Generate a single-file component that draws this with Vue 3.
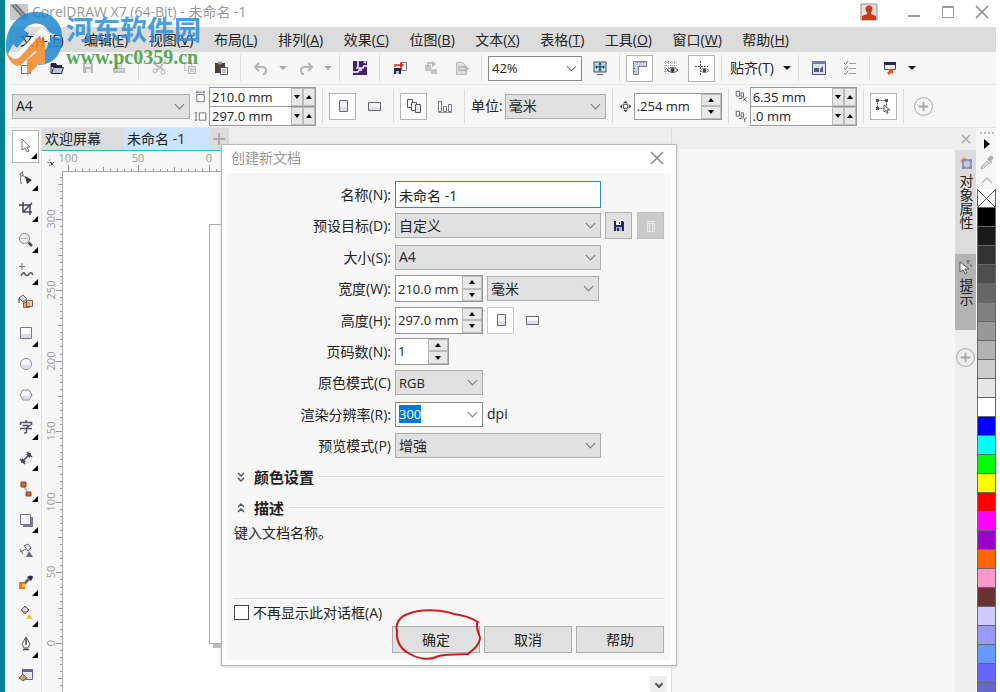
<script setup>
import { ref, onMounted } from 'vue'

const docName = ref('未命名 -1')
const resolution = ref('300')
const resolutionInput = ref(null)

onMounted(() => {
  resolutionInput.value.focus()
  resolutionInput.value.select()
})

const menus = [
  ['文件', 'F'], ['编辑', 'E'], ['视图', 'V'], ['布局', 'L'], ['排列', 'A'], ['效果', 'C'],
  ['位图', 'B'], ['文本', 'X'], ['表格', 'T'], ['工具', 'O'], ['窗口', 'W'], ['帮助', 'H']
]

const icons = {
  newDoc: '<path d="M3.5 5.5h9v8h-9z" fill="#f4f4fa" stroke="#6f6f80"/><circle cx="12.500" cy="4.500" r="2.500" fill="#a5c83c"/>',
  open: '<path d="M2 3h5l1 2h5v2H2z" fill="#24243c"/><path d="M2 13V4M2.500 13.500l2-6h10l-2 6z" fill="#b9c3d8" stroke="#24243c"/>',
  save: '<path d="M3 3h9l1 1v9H3z" fill="#b9b9b9"/><path d="M5 3h6v4H5zM6 9h5v4H6z" fill="#e9e9e9"/>',
  print: '<path d="M5 3h6v4H5z" fill="#e2e2e2" stroke="#c4c4c4"/><path d="M2 8h12v5H2z" fill="#bebebe"/><path d="M4 10h8" stroke="#eee"/>',
  cut: '<path d="M2 3l11 7M13 3L6 10" stroke="#b5b5b5" stroke-width="1.500"/><circle cx="4" cy="11" r="2" fill="none" stroke="#b5b5b5"/><circle cx="12" cy="12" r="2" fill="none" stroke="#b5b5b5"/>',
  copy: '<path d="M2.500 2.500h7v8h-7z" fill="#eee" stroke="#c4c4c4"/><path d="M6.500 6.500h7v7h-7z" fill="#e2e2e2" stroke="#b8b8b8"/><path d="M8 9h4M8 11h4" stroke="#bbb"/>',
  paste: '<path d="M2 3h10v10H2z" fill="#4b3d36"/><path d="M5 1.500h4v3H5z" fill="#999"/><path d="M7.500 7.500h7v7h-7z" fill="#fff" stroke="#55556c"/><path d="M9 10h4M9 12h4" stroke="#8888a0"/>',
  undo: '<path d="M6 3L2 7l4 4M3 7h6q4 0 4 3.500T10 14" fill="none" stroke="#b5b5b5" stroke-width="2"/>',
  redo: '<path d="M10 3l4 4-4 4M13 7H7q-4 0-4 3.500T6 14" fill="none" stroke="#b5b5b5" stroke-width="2"/>',
  connect: '<path d="M1 1h14v14H1z" fill="#45206f"/><path d="M6 1v5l-1 2h6l1-2h3M1 12h5l1-2h3" fill="none" stroke="#fff" stroke-width="1.500"/><path d="M11 2l3-1v3z" fill="#fff"/>',
  importIcon: '<path d="M9.500 2.500h5v8h-5z" fill="#f4f4fa" stroke="#77778c"/><path d="M2 8h7v6H2z" fill="#26264d"/><path d="M4 11h3v3H4z" fill="#b7bde0"/><path d="M3 7V5h6" stroke="#d52b1e" stroke-width="1.500" fill="none"/><path d="M8 2l4 3-4 3z" fill="#d52b1e"/>',
  exportIcon: '<path d="M2 5h6v6H2zM8 9h6v5H8z" fill="#c6c6c6"/><path d="M5 7V3h5" stroke="#b4b4b4" fill="none" stroke-width="1.500"/><path d="M9 1l4 3-4 3z" fill="#b4b4b4"/>',
  pdf: '<path d="M2.500 2.500h6l4 4v8h-10z" fill="#dedede" stroke="#bcbcbc"/><path d="M4 6h7V4l4 4.500L11 13v-2H4z" fill="#bcbcbc"/><path d="M5 8.500h6" stroke="#e6e6e6"/>',
  fullScreen: '<path d="M2 2h12v10H2z" fill="#a9dfe8" stroke="#4a4a60"/><path d="M8 3v8M4 7h8" stroke="#23233f"/><path d="M8 2.500l1.500 2h-3zM8 11.500l1.500-2h-3zM3 7l2-1.500v3zM13 7l-2-1.500v3z" fill="#23233f"/><path d="M5 14.500h6" stroke="#5b5b70"/>',
  ruler: '<path d="M1.500 1.500h13v5h-8v8h-5z" fill="#cdd0df" stroke="#7b7e93"/><path d="M5.500 2v1M8.500 2v1M11.500 2v1M2 8.500h1M2 11.500h1" stroke="#6a6d82"/>',
  grid: '<path d="M1 2.500h13M1 5.500h13M1 8.500h5M1 11.500h4M2.500 1v13M5.500 1v13M8.500 1v5M11.500 1v5" stroke="#a9a9c0" stroke-dasharray="1 1"/><path d="M4 10q5-5 11 0-5 5-11 0z" fill="#fff" stroke="#444"/><circle cx="9.500" cy="10" r="2" fill="#333"/>',
  guides: '<path d="M6.500 1v14M1 6.500h13" stroke="#55555f" stroke-dasharray="2 1"/><path d="M6 10.500q4-4 9 0-4 4-9 0z" fill="#fff" stroke="#777"/><circle cx="10.500" cy="10.500" r="1.800" fill="#444"/>',
  options: '<path d="M1.500 1.500h13v13h-13z" fill="#dfe1f0" stroke="#54567c"/><path d="M1 1h14v3H1z" fill="#7779a8"/><path d="M3 8h5v4H3zM9 9l3-3v6H9z" fill="#54567c"/>',
  checks: '<path d="M2 3l1.500 1.500L6 1M2 8l1.500 1.500L6 6M2 13l1.500 1.500L6 11" stroke="#7e7e7e" fill="none"/><path d="M7 3.500h7M7 8.500h7M7 13.500h7" stroke="#9c9c9c"/>',
  launch: '<path d="M2.500 2.500h11v7h-11z" fill="#eef0fa" stroke="#44466a"/><path d="M2 2h12v3H2z" fill="#26284a"/><path d="M6 9h5v5l-1.500-1.500L7 15l-2-2 2-2z" fill="#e8501f"/>',
  portrait: '<path d="M4.500 2.500h8v11h-8z" fill="#f3f3fa" stroke="#666677"/><path d="M5 9h7v4H5z" fill="#dddde9"/>',
  landscape: '<path d="M2.500 4.500h12v8h-12z" fill="#f7f7fb" stroke="#666677"/><path d="M3 9h11v3H3z" fill="#dddde9"/>',
  allPages: '<path d="M1.500 1.500h5v8h-5z" fill="#fff" stroke="#555568"/><path d="M5.500 4.500h5v8h-5z" fill="#fff" stroke="#555568"/><path d="M9.500 6.500h5v8h-5z" fill="#e6e6f0" stroke="#555568"/>',
  curPage: '<path d="M1.500 3.500h3v10h-3zM6.500 8.500h3v5h-3zM11.500 6.500h3v7h-3z" fill="#fff" stroke="#777788"/><path d="M1 14.500h14" stroke="#999"/>',
  nudge: '<path d="M8 1l3 3H5zM8 15l3-3H5zM1 8l3-3v6zM15 8l-3-3v6z" fill="#444"/><path d="M5.500 5.500h5v5h-5z" fill="#fff" stroke="#444"/>',
  treat: '<path d="M2.500 2.500h9v8h-9z" fill="none" stroke="#555568" stroke-dasharray="2 1"/><path d="M1 1h3v3H1zM10 1h3v3h-3zM1 9h3v3H1z" fill="#555568"/><path d="M9 7l6 5h-3l1 3-1 .5-1.500-3L9 14z" fill="#fff" stroke="#555568"/>',
  plus: '<circle cx="8" cy="8" r="7.500" fill="none" stroke="#b4b4b4"/><path d="M8 4v8M4 8h8" stroke="#a4a4a4" stroke-width="1.500"/>',
  widthIcon: '<path d="M3.500 5.500h9v9h-9z" fill="#fff" stroke="#555568"/><path d="M3 2.500h10M3.500 1v3M12.500 1v3" stroke="#555568"/>',
  heightIcon: '<path d="M6.500 3.500h8v9h-8z" fill="#fff" stroke="#555568"/><path d="M2.500 3v10M1 3.500h3M1 12.500h3" stroke="#555568"/>',
  dupX: '<path d="M1.500 1.500h4v6h-4zM7.500 3.500h3v5h-3z" fill="#fff" stroke="#444466"/><path d="M5 10.500h4M10 9l4 5M14 9l-4 5" stroke="#444466"/>',
  dupY: '<path d="M1.500 1.500h4v6h-4zM7.500 3.500h3v5h-3z" fill="#fff" stroke="#444466"/><path d="M5 10.500h4M10 9l2 3 2-3M12 12v3" stroke="#444466" fill="none"/>',
  origin: '<path d="M5.500 2v12M2 6.500h12M8 8l5 5" stroke="#222" stroke-dasharray="2 2"/><path d="M7 7l4 1-3 3z" fill="#222"/>',
  disk: '<path d="M3 3h9l1 1v9H3z" fill="#23265c"/><path d="M5 3h5v4H5z" fill="#fff"/><path d="M8 4h1v2H8z" fill="#23265c"/><path d="M5 9h6v4H5z" fill="#aeb3d6"/><path d="M6 10h2v3H6z" fill="#23265c"/>',
  trash: '<path d="M4.500 5.500h7v8h-7zM4 3.500h8M6.500 6v7M9.500 6v7" stroke="#ebebeb" fill="none"/>',
  eyedrop: '<path d="M2 14l1-3 5-5 2 2-5 5z" fill="#ddd" stroke="#b0b0b0"/><path d="M8 4l4 4 1-1-1-1 2-2q1-2-1-3-1-1-2 0L9 3z" fill="#adadad"/>',
  props: '<path d="M2 6l4-4 4 3-3 6z" fill="#e9a23c"/><path d="M5 5h8v8H5z" fill="#c9c6e6" stroke="#6c6799"/><path d="M4 4h3v3H4zM11 4h3v3h-3zM4 11h3v3H4zM11 11h3v3h-3z" fill="#8c87b8"/>',
  hints: '<path d="M2 3l9 7H7l2 4-2 1-2-4-3 2z" fill="#fff" stroke="#555"/><path d="M8 2h4M9 4h2M13 5v3" stroke="#555"/>'
}

const tools = [
  { name: '选择', more: true, boxed: true, art: '<path d="M4 1l8 8H9l2 4-2 1-2-4-3 2z" fill="#fff" stroke="#777"/>' },
  { name: '形状', more: true, art: '<path d="M3 14Q1 7 5 1M3 4l5 4" fill="none" stroke="#666"/><circle cx="3.500" cy="4.500" r="1.500" fill="#fff" stroke="#555"/><path d="M7 6l7 4-5 4z" fill="#333344"/>' },
  { name: '裁剪', more: true, art: '<path d="M5 1v10h9M1 4h11v10M5 11l9-9" fill="none" stroke="#444458" stroke-width="1.500"/>' },
  { name: '缩放', more: true, art: '<circle cx="6.500" cy="6.500" r="5" fill="#eeeef6" stroke="#888"/><path d="M3 6.500h7" stroke="#bbb"/><path d="M10.500 10.500L14 14" stroke="#44445c" stroke-width="2.500"/>' },
  { name: '手绘', more: true, art: '<path d="M4 0v7M1 3.500h6" stroke="#777"/><path d="M3 13q2-5 4-2t4 0 4 1" fill="none" stroke="#555568" stroke-width="1.500"/>' },
  { name: '智能填充', art: '<path d="M1 4l4-3 4 4-4 3z" fill="#d4d4de" stroke="#666"/><path d="M1 4v5" stroke="#333"/><path d="M5.500 8.500h6v5h-6z" fill="#f2a35c" stroke="#9c5c28"/><path d="M8.500 6.500h6v6h-6z" fill="#f4c090" fill-opacity=".7" stroke="#7a5a48"/>' },
  { name: '矩形', more: true, art: '<path d="M2.500 2.500h11v11h-11z" fill="#fff" stroke="#777788"/><path d="M3 9h10v4H3z" fill="#dcdce8"/>' },
  { name: '椭圆', more: true, art: '<circle cx="8" cy="8" r="5.500" fill="#f6f6fb" stroke="#888896"/><path d="M3 9h10q-1 4-5 4T3 9z" fill="#dcdce8"/>' },
  { name: '多边形', more: true, art: '<path d="M5 3h6l3 5-3 5H5L2 8z" fill="#f6f6fb" stroke="#888896"/><path d="M3 9h10l-2 3H5z" fill="#dcdce8"/>' },
  { name: '文本', more: true, art: '<path d="M8 1v2M2.500 6V3.500h11V6M4.500 6.500h7L8.500 9v4q0 1-2.500 1M2 9.500h12" fill="none" stroke="#555568" stroke-width="1.500"/>' },
  { name: '平行度量', more: true, art: '<path d="M4 12l8-8M2 9l5 5M9 2l5 5" stroke="#44445c" stroke-width="1.500"/><path d="M3 13l1-5 4 4zM13 3l-5 1 4 4z" fill="#44445c"/>' },
  { name: '连接器', more: true, art: '<path d="M5 5l6 8" stroke="#888"/><path d="M3 1h5v5H3zM8 11h5v4H8z" fill="#c96a35" stroke="#8a4520"/>' },
  { name: '阴影', more: true, art: '<path d="M5 5h10v10H5z" fill="#77779a"/><path d="M2.500 2.500h10v10h-10z" fill="#f2f2f8" stroke="#77779a"/>' },
  { name: '透明度', art: '<path d="M6 3l4-2 3 4-3 3zM8 6L2 9M2 6l3 5" fill="#e4e4ee" stroke="#666680"/><path d="M8 14l3-6 4 6z" fill="#666690"/>' },
  { name: '颜色滴管', more: true, art: '<path d="M6 10l5-5" stroke="#666680" stroke-width="3"/><path d="M9 3l4 4 1-2q2-2 0-3t-3 0z" fill="#26264a"/><path d="M1 8h6v7H1z" fill="#e87a16"/><path d="M4 10h3v3H4z" fill="#ffb54a"/>' },
  { name: '交互式填充', more: true, art: '<path d="M3 5l4-4 4 4-4 4z" fill="#d8955a" stroke="#666680"/><path d="M5 3h4v3H5z" fill="#d4d4e8"/><path d="M8 14l3-5 4 5z" fill="#f4bd3c"/>' },
  { name: '轮廓笔', more: true, art: '<path d="M8 1l4 7-2 4H6L4 8z" fill="#fff" stroke="#555568"/><path d="M8 2v7M5 13.500h6" stroke="#44445c" stroke-width="1.500"/>' },
  { name: '颜色样式', art: '<path d="M4.500 2.500h10v10h-10z" fill="#e6e6f4" stroke="#666690"/><path d="M4 2h11v3H4z" fill="#666690"/><path d="M1 11l4-4 4 4-4 3z" fill="#c9a15c" stroke="#666680"/>' }
]

const bar = [
  { i: 'newDoc', n: '新建' }, { i: 'open', n: '打开' }, { i: 'save', n: '保存' }, { i: 'print', n: '打印' }, { sep: 1 },
  { i: 'cut', n: '剪切' }, { i: 'copy', n: '复制' }, { i: 'paste', n: '粘贴' }, { sep: 1 },
  { i: 'undo', n: '撤消' }, { caret: 1, dim: 1, n: '撤消列表' }, { i: 'redo', n: '重做' }, { caret: 1, dim: 1, n: '重做列表' }, { sep: 1 },
  { i: 'connect', n: '搜索内容' }, { sep: 1 }, { i: 'importIcon', n: '导入' }, { i: 'exportIcon', n: '导出' }, { i: 'pdf', n: '发布为 PDF' }, { sep: 1 }
]
const barRight = [
  { i: 'fullScreen', n: '全屏预览' }, { sep: 1 }, { i: 'ruler', n: '显示标尺', boxed: 1 }, { i: 'grid', n: '显示网格' }, { i: 'guides', n: '显示辅助线', boxed: 1 }, { sep: 1 }
]
const barEnd = [
  { sep: 1 }, { i: 'options', n: '选项' }, { i: 'checks', n: '对象管理' }, { sep: 1 }, { i: 'launch', n: '应用程序启动器' }, { caret: 1, n: '启动器列表' }
]

const palette = [
  '#000000', '#1a1a1a', '#333333', '#4d4d4d', '#666666', '#808080', '#999999', '#b3b3b3', '#cccccc', '#e6e6e6', '#ffffff',
  '#0000ff', '#00ffff', '#00ff00', '#ffff00', '#ff0000', '#ff00ff', '#9900cc', '#ff6600', '#ff99cc', '#663333',
  '#ccccff', '#9999ff', '#6699ff', '#6666ff', '#6666cc'
]

const scale = 1.412
function makeTicks(from, to) {
  const list = []
  for (let v = from; v <= to; v += 5) {
    list.push({ v, d: Math.round(v * scale), len: v % 50 === 0 ? 6 : v % 25 === 0 ? 4 : 2 })
  }
  return list
}
const hTicks = makeTicks(-320, 100)
const vTicks = makeTicks(-45, 330)
</script>

<template>
  <div class="app">
    <header class="titlebar">
      <svg class="app-icon" viewBox="0 0 18 16"><path d="M0 0h18v16H0z" fill="#c5c8ca" /><path d="M2 1l12 13M5 0l11 12" stroke="#777" stroke-width="2" /></svg>
      <h1>CorelDRAW X7 (64-Bit) - 未命名 -1</h1>
      <button class="user" aria-label="用户"><svg width="18" height="18" viewBox="0 0 18 18"><path d="M1 1h16v16H1z" fill="#eadfdb" stroke="#998c88" /><circle cx="9" cy="6" r="3.500" fill="#c43d1c" /><path d="M7 8h4v3l5 2v4H2v-4l5-2z" fill="#c43d1c" /></svg></button>
      <button class="win" aria-label="最小化"><svg width="14" height="14" viewBox="0 0 14 14"><path d="M1 11h12" stroke="#999" stroke-width="2" /></svg></button>
      <button class="win" aria-label="最大化"><svg width="14" height="14" viewBox="0 0 14 14"><path d="M1.500 1.500h11v11h-11z" fill="none" stroke="#999" /><path d="M1 2h12" stroke="#999" stroke-width="2" /></svg></button>
      <button class="win" aria-label="关闭"><svg width="14" height="14" viewBox="0 0 14 14"><path d="M1 1l12 12M13 1L1 13" stroke="#888" stroke-width="1.500" /></svg></button>
    </header>

    <nav class="menubar">
      <a v-for="m in menus" :key="m[0]" href="#">{{ m[0] }}(<u>{{ m[1] }}</u>)</a>
    </nav>

    <div class="toolbar">
      <template v-for="(b, k) in bar" :key="k">
        <i v-if="b.sep" class="sep"></i>
        <button v-else-if="b.caret" class="caret" :class="{ dim: b.dim }" :aria-label="b.n"></button>
        <button v-else class="tb" :aria-label="b.n"><svg class="ic" viewBox="0 0 16 16" v-html="icons[b.i]"></svg></button>
      </template>
      <span class="pick zoom white"><select aria-label="缩放级别"><option>42%</option></select></span>
      <template v-for="(b, k) in barRight" :key="'r' + k">
        <i v-if="b.sep" class="sep"></i>
        <button v-else class="tb" :class="{ boxed: b.boxed }" :aria-label="b.n"><svg class="ic" viewBox="0 0 16 16" v-html="icons[b.i]"></svg></button>
      </template>
      <button class="snap">贴齐(T)<span class="caret"></span></button>
      <template v-for="(b, k) in barEnd" :key="'e' + k">
        <i v-if="b.sep" class="sep"></i>
        <button v-else-if="b.caret" class="caret" :aria-label="b.n"></button>
        <button v-else class="tb" :aria-label="b.n"><svg class="ic" viewBox="0 0 16 16" v-html="icons[b.i]"></svg></button>
      </template>
    </div>

    <div class="toolbar props">
      <span class="pick paper"><select aria-label="页面大小"><option>A4</option></select></span>
      <div class="pair">
        <svg class="mini" viewBox="0 0 16 16" v-html="icons.widthIcon"></svg>
        <span class="wide-spin"><input value="210.0 mm" aria-label="页面宽度"><button class="dn" aria-label="减小"></button><button class="up" aria-label="增大"></button></span>
        <svg class="mini" viewBox="0 0 16 16" v-html="icons.heightIcon"></svg>
        <span class="wide-spin"><input value="297.0 mm" aria-label="页面高度"><button class="dn" aria-label="减小"></button><button class="up" aria-label="增大"></button></span>
      </div>
      <i class="sep"></i>
      <button class="tb boxed" aria-label="纵向"><svg class="ic" viewBox="0 0 16 16" v-html="icons.portrait"></svg></button>
      <button class="tb" aria-label="横向"><svg class="ic" viewBox="0 0 16 16" v-html="icons.landscape"></svg></button>
      <i class="sep"></i>
      <button class="tb boxed" aria-label="所有页面"><svg class="ic" viewBox="0 0 16 16" v-html="icons.allPages"></svg></button>
      <button class="tb" aria-label="当前页"><svg class="ic" viewBox="0 0 16 16" v-html="icons.curPage"></svg></button>
      <i class="sep"></i>
      <div class="unit"><label for="unit">单位:</label><span class="pick"><select id="unit"><option>毫米</option></select></span></div>
      <i class="sep"></i>
      <div class="unit">
        <svg class="mini" viewBox="0 0 16 16" v-html="icons.nudge"></svg>
        <span class="spin nudge"><input value=".254 mm" aria-label="微调距离"><span><button class="up" aria-label="增大"></button><button class="dn" aria-label="减小"></button></span></span>
      </div>
      <i class="sep"></i>
      <div class="pair">
        <svg class="mini" viewBox="0 0 16 16" v-html="icons.dupX"></svg>
        <span class="wide-spin"><input value="6.35 mm" aria-label="再制距离 X"><button class="dn" aria-label="减小"></button><button class="up" aria-label="增大"></button></span>
        <svg class="mini" viewBox="0 0 16 16" v-html="icons.dupY"></svg>
        <span class="wide-spin"><input value=".0 mm" aria-label="再制距离 Y"><button class="dn" aria-label="减小"></button><button class="up" aria-label="增大"></button></span>
      </div>
      <i class="sep"></i>
      <button class="tb boxed" aria-label="视为已填充"><svg class="ic" viewBox="0 0 16 16" v-html="icons.treat"></svg></button>
      <i class="sep"></i>
      <button class="tb" aria-label="自定义"><svg class="ic big" viewBox="0 0 16 16" v-html="icons.plus"></svg></button>
    </div>

    <main class="workspace">
      <aside class="toolbox">
        <button v-for="t in tools" :key="t.name" :aria-label="t.name" :class="{ boxed: t.boxed, more: t.more }">
          <svg class="ic" viewBox="0 0 16 16" v-html="t.art"></svg>
        </button>
      </aside>

      <section class="doc">
        <div class="tabs">
          <button class="tab">欢迎屏幕</button>
          <button class="tab active">未命名 -1</button>
          <button class="tab add" aria-label="新建文档"><svg width="14" height="14" viewBox="0 0 14 14"><path d="M7 1v12M1 7h12" stroke="#aaa" stroke-width="2" /></svg></button>
        </div>
        <div class="sheet">
          <div class="corner"><svg class="mini" viewBox="0 0 16 16" v-html="icons.origin"></svg></div>
          <div class="ruler-h">
            <svg width="100%" height="20">
              <g transform="translate(147 0)">
                <template v-for="t in hTicks" :key="t.v">
                  <path :d="`M${-t.d + 0.5} 20v${-t.len}`" stroke="#999" />
                  <text v-if="t.v % 50 === 0" :x="-t.d" y="11" text-anchor="middle">{{ Math.abs(t.v) }}</text>
                </template>
              </g>
            </svg>
          </div>
          <div class="ruler-v">
            <svg width="20" height="100%">
              <g transform="translate(0 472)">
                <template v-for="t in vTicks" :key="t.v">
                  <path :d="`M20 ${-t.d + 0.5}h${-t.len}`" stroke="#999" />
                  <text v-if="t.v % 50 === 0" :transform="`translate(13 ${-t.d}) rotate(-90)`" text-anchor="middle">{{ t.v }}</text>
                </template>
              </g>
            </svg>
          </div>
          <div class="canvas">
            <div class="page"></div>
            <button class="scroll" aria-label="向下滚动"><span></span></button>
          </div>
        </div>
      </section>

      <section class="dock"><div class="dock-head"></div></section>

      <aside class="dock-tabs">
        <button class="dock-close" aria-label="关闭泊坞窗"><svg width="10" height="10" viewBox="0 0 10 10"><path d="M1 1l8 8M9 1L1 9" stroke="#aaa" stroke-width="1.500" /></svg></button>
        <button class="dock-tab first"><svg class="ic" viewBox="0 0 16 16" v-html="icons.props"></svg><span>对象属性</span></button>
        <button class="dock-tab current"><svg class="ic" viewBox="0 0 16 16" v-html="icons.hints"></svg><span>提示</span></button>
        <button class="dock-add" aria-label="添加泊坞窗"><svg class="ic big" viewBox="0 0 16 16" v-html="icons.plus"></svg></button>
      </aside>

      <aside class="palette">
        <div class="palette-head">
          <i class="grip"></i>
          <button aria-label="调色板菜单"><svg width="6" height="10" viewBox="0 0 6 10"><path d="M0 0l6 5-6 5z" fill="#000" /></svg></button>
          <button aria-label="滴管"><svg class="ic" viewBox="0 0 16 16" v-html="icons.eyedrop"></svg></button>
          <button aria-label="向上滚动"><svg width="12" height="8" viewBox="0 0 12 8"><path d="M1 7l5-5 5 5" fill="none" stroke="#bbb" stroke-width="1.500" /></svg></button>
        </div>
        <button class="swatch" aria-label="无色"><svg width="17" height="17" viewBox="0 0 17 17"><path d="M0 0l17 17M17 0L0 17" stroke="#555" /></svg></button>
        <button v-for="c in palette" :key="c" class="swatch" :aria-label="c" :style="{ background: c }"></button>
      </aside>
    </main>

    <div class="dialog" role="dialog" aria-labelledby="dlg-title">
      <div class="dlg-head">
        <h2 id="dlg-title">创建新文档</h2>
        <button aria-label="关闭对话框"><svg width="14" height="14" viewBox="0 0 14 14"><path d="M1 1l12 12M13 1L1 13" stroke="#888" stroke-width="1.500" /></svg></button>
      </div>
      <div class="dlg-body">
        <form class="form" @submit.prevent>
          <label for="f-name">名称(N):</label>
          <div class="row"><input id="f-name" v-model="docName" class="text wide"></div>
          <label for="f-preset">预设目标(D):</label>
          <div class="row">
            <span class="pick wide"><select id="f-preset"><option>自定义</option></select></span>
            <button class="square" aria-label="保存预设"><svg class="ic" viewBox="0 0 16 16" v-html="icons.disk"></svg></button>
            <button class="square off" aria-label="删除预设" disabled><svg class="ic" viewBox="0 0 16 16" v-html="icons.trash"></svg></button>
          </div>
          <label for="f-size">大小(S):</label>
          <div class="row"><span class="pick wide"><select id="f-size"><option>A4</option></select></span></div>
          <label for="f-w">宽度(W):</label>
          <div class="row">
            <span class="spin"><input id="f-w" value="210.0 mm"><span><button class="up" aria-label="增大"></button><button class="dn" aria-label="减小"></button></span></span>
            <span class="pick unit-pick"><select aria-label="单位"><option>毫米</option></select></span>
          </div>
          <label for="f-h">高度(H):</label>
          <div class="row">
            <span class="spin"><input id="f-h" value="297.0 mm"><span><button class="up" aria-label="增大"></button><button class="dn" aria-label="减小"></button></span></span>
            <button class="tb boxed" aria-label="纵向"><svg class="ic" viewBox="0 0 16 16" v-html="icons.portrait"></svg></button>
            <button class="tb" aria-label="横向"><svg class="ic" viewBox="0 0 16 16" v-html="icons.landscape"></svg></button>
          </div>
          <label for="f-pages">页码数(N):</label>
          <div class="row"><span class="spin short"><input id="f-pages" value="1"><span><button class="up" aria-label="增大"></button><button class="dn" aria-label="减小"></button></span></span></div>
          <label for="f-mode">原色模式(C)</label>
          <div class="row"><span class="pick half"><select id="f-mode"><option>RGB</option></select></span></div>
          <label for="f-res">渲染分辨率(R):</label>
          <div class="row"><span class="pick half white"><input id="f-res" ref="resolutionInput" v-model="resolution"></span><span>dpi</span></div>
          <label for="f-view">预览模式(P)</label>
          <div class="row"><span class="pick wide"><select id="f-view"><option>增強</option></select></span></div>
        </form>

        <button class="fold"><svg width="10" height="12" viewBox="0 0 10 12"><path d="M2 2l3 3 3-3M2 7l3 3 3-3" fill="none" stroke="#555" stroke-width="1.500" /></svg><b>颜色设置</b><i></i></button>
        <button class="fold"><svg width="10" height="12" viewBox="0 0 10 12"><path d="M2 5l3-3 3 3M2 10l3-3 3 3" fill="none" stroke="#555" stroke-width="1.500" /></svg><b>描述</b><i></i></button>
        <p class="desc">键入文档名称。</p>
        <label class="again"><input type="checkbox">不再显示此对话框(A)</label>
        <div class="actions">
          <div class="ok">
            <button>确定</button>
            <svg class="ring" width="92" height="56" viewBox="0 0 92 56"><path d="M86 16C78 11 70 9 62 8C48 3 26 3 16 8C8 10 3 18 5 25C4 35 8 42 16 47C24 52 36 55 44 51C50 48 58 49 76 48C80 44 86 42 88 33C89 30 84 26 85 17" fill="none" stroke="#d01c1c" stroke-width="2" stroke-linecap="round" /></svg>
          </div>
          <button>取消</button>
          <button>帮助</button>
        </div>
      </div>
    </div>

    <div class="mark">
      <svg width="58" height="68" viewBox="0 0 58 68">
        <path d="M2 46C-4 20 14 0 34 2C48 3 58 14 57 28L44 22C40 12 26 10 19 20L24 24L12 38L8 34Z" fill="#2189cf" />
        <path d="M57 28C58 44 48 55 33 55L30 44C40 44 45 36 43 26Z" fill="#2189cf" />
        <path d="M3 53L37 17L45 25V33L38 27L12 53Z" fill="#fff" />
        <path d="M0 38C4 48 10 52 16 46L34 26L40 32V54H31V40L16 55C10 58 3 52 0 38Z" fill="#f08a2c" />
        <path d="M22 66V50L32 42V56Z" fill="#f08a2c" />
      </svg>
      <div class="mark-text"><strong>河东软件园</strong><em>www.pc0359.cn</em></div>
    </div>
  </div>
</template>

<style>
body { margin: 0; background: #fff; }
</style>

<style scoped>
* { box-sizing: border-box; }
.app {
  position: relative;
  display: flex;
  flex-direction: column;
  height: 100vh;
  min-height: 640px;
  overflow: hidden;
  background: #fff;
  color: #222;
  font: 14px/20px "Open Sans", "Noto Sans", "Noto Sans CJK SC", sans-serif;
  border-left: 5px solid #078290;
}
button, input, select { font: inherit; color: inherit; margin: 0; padding: 0; border: 0; background: none; border-radius: 0; }
button { display: flex; align-items: center; justify-content: center; flex: none; }
svg { display: block; flex: none; }
input { min-width: 0; outline: 0; }
.ic { width: 16px; height: 16px; }
.big { width: 19px; height: 19px; }
.mini { width: 13px; height: 13px; }

.titlebar { display: flex; align-items: center; height: 27px; flex: none; padding: 0 1px 3px 5px; }
.app-icon { width: 18px; height: 16px; margin-right: 4px; }
.titlebar h1 { flex: 1; margin: 0; font-size: 14px; line-height: 20px; font-weight: 400; color: #999; white-space: nowrap; }
.user { width: 56px; }
.win { width: 34px; }

.menubar { display: flex; align-items: center; justify-content: space-between; gap: 12px; height: 25px; flex: none; margin: 0 4px 0 5px; padding: 0 207px 0 10px; background: #dcdcdc; }
.menubar a { color: #222; text-decoration: none; white-space: nowrap; }

.toolbar { display: flex; align-items: center; gap: 4px; height: 33px; flex: none; margin: 0 4px 0 5px; padding-left: 2px; background: #f7f7f7; border-bottom: 1px solid #e6e6e6; }
.props { height: 43px; }
.tb { width: 27px; height: 27px; }
.boxed { background: #fff; border: 1px solid #b4b4b4; }
.sep { width: 1px; height: 26px; margin: 0 2px; background: #dcdcdc; flex: none; }
.props .sep { height: 34px; }
.caret { width: 10px; flex: none; display: flex; justify-content: center; }
.caret::before { content: ""; border: 4px solid transparent; border-top-color: #111; border-bottom: 0; }
.caret.dim::before { border-top-color: #aaa; }
.snap { width: 64px; justify-content: space-between; padding-left: 2px; }

.pick { position: relative; display: block; height: 25px; flex: none; background: #e1e1e1; border: 1px solid #adadad; }
.pick::after { content: ""; position: absolute; right: 6px; top: 6px; width: 6px; height: 6px; border: solid #777; border-width: 0 1px 1px 0; transform: rotate(45deg); pointer-events: none; }
.pick select, .pick input { appearance: none; display: block; width: 100%; height: 100%; padding: 0 20px 0 3px; outline: 0; }
.pick.white { background: #fff; border-color: #8a8a8a; }
.zoom { width: 94px; font-size: 13px; }
.paper { width: 178px; }
.unit { display: flex; align-items: center; gap: 2px; }
.unit .pick { width: 101px; }

.pair { display: grid; grid-template-columns: 15px 107px; align-items: center; }
.wide-spin { display: grid; grid-template-columns: 1fr 12px 12px; height: 20px; background: #fff; border: 1px solid #999; font-size: 13px; line-height: 18px; }
.wide-spin + .mini + .wide-spin { height: 19px; border-top: 0; }
.wide-spin input { padding-left: 2px; height: 18px; }
.up, .dn { background: #e8e8e8; border: 1px solid #bbb; }
.up::before, .dn::before { content: ""; border: 3px solid transparent; }
.up::before { border-bottom: 4px solid #000; border-top: 0; }
.dn::before { border-top: 4px solid #000; border-bottom: 0; }
.spin { display: flex; width: 88px; height: 27px; flex: none; background: #fff; border: 1px solid #999; font-size: 13px; }
.spin input { flex: 1; width: 20px; padding-left: 2px; }
.spin > span { display: grid; grid-template-rows: 1fr 1fr; width: 20px; }
.short { width: 54px; }

.workspace { display: flex; flex: 1; min-height: 0; padding-right: 4px; }
.toolbox { display: flex; flex-direction: column; width: 37px; flex: none; padding: 2px 2px 0; background: #f7f7f7; border-right: 1px solid #e2e2e2; border-left: 5px solid #fff; }
.toolbox button { position: relative; flex: 1 1 0; width: 27px; padding-bottom: 2px; }
.toolbox .more::after { content: ""; position: absolute; right: 1px; bottom: 3px; border-left: 6px solid transparent; border-bottom: 6px solid #000; }

.doc { display: flex; flex-direction: column; flex: 1; min-width: 0; border-right: 1px solid #ddd; }
.tabs { display: flex; height: 23px; flex: none; background: #eee; border-bottom: 1px solid #35b5c5; }
.tab { justify-content: flex-start; width: 82px; padding-left: 3px; background: #dcdcdc; white-space: nowrap; }
.active { width: 85px; background: #cce4ff; }
.add { width: 20px; justify-content: center; padding: 0; }
.sheet { display: grid; grid-template-columns: 20px 1fr; grid-template-rows: 20px 1fr; flex: 1; min-height: 0; background: #f7f7f7; }
.sheet > * { min-width: 0; min-height: 0; overflow: hidden; }
.sheet .ruler-h, .ruler-h svg { overflow: visible; }
.sheet text { font-size: 11px; fill: #999; }
.corner { display: flex; align-items: flex-end; justify-content: flex-start; padding: 0 0 2px 4px; }
.corner .mini { width: 11px; height: 11px; }
.canvas { position: relative; display: flex; align-items: flex-end; justify-content: flex-end; padding-right: 4px; background: #fff; border-left: 1px solid #aaa; border-top: 1px solid #aaa; }
.page { position: absolute; left: 146px; top: 52px; width: 297px; height: 420px; border: 1px solid #aaa; box-shadow: 4px 4px 0 #bbb; }
.scroll { width: 17px; height: 16px; background: #eee; }
.scroll span { width: 6px; height: 6px; border: solid #555; border-width: 0 2px 2px 0; transform: rotate(45deg); }

.dock { width: 283px; flex: none; background: #f7f7f7; }
.dock-head { height: 21px; background: #eee; }
.dock-tabs { display: flex; flex-direction: column; align-items: center; width: 21px; flex: none; background: #eee; }
.dock-close { width: 21px; height: 22px; }
.dock-tab { flex-direction: column; justify-content: flex-start; width: 21px; height: 76px; padding-top: 5px; background: #b4b4b4; gap: 3px; }
.dock-tab span { writing-mode: vertical-rl; line-height: 20px; }
.dock-tab.first { height: 104px; background: #dcdcdc; }
.dock-add { margin-top: 18px; }
.palette { width: 20px; flex: none; overflow: hidden; background: #f7f7f7; padding-left: 1px; }
.palette-head { display: flex; flex-direction: column; align-items: center; justify-content: space-between; height: 61px; padding: 4px 0 5px; }
.grip { width: 14px; border-top: 2px dotted #bbb; }
.swatch { width: 19px; height: 19px; border: 1px solid #666; border-top-width: 0; overflow: hidden; background: #fff; }

.dialog { position: absolute; left: 216px; top: 144px; width: 456px; padding: 0 5px 5px; background: #fff; border: 1px solid #b9b9b9; box-shadow: 0 1px 3px #ccc; }
.dlg-head { display: flex; align-items: center; justify-content: space-between; height: 28px; padding: 0 7px 2px 4px; }
.dlg-head h2 { margin: 0; font-size: 14px; font-weight: 400; color: #999; }
.dlg-body { padding: 8px 7px 7px; background: #f7f7f7; }
.form { display: grid; grid-template-columns: 157px 1fr; column-gap: 4px; align-content: space-between; min-height: 278px; }
.form > label { height: 27px; line-height: 27px; text-align: right; white-space: nowrap; }
.row { display: flex; align-items: center; gap: 4px; height: 27px; }
.wide { width: 206px; }
.text { height: 27px; padding: 0 3px; background: #fff; border: 1px solid #2f8fb3; }
.half { width: 88px; font-size: 13px; }
.unit-pick { width: 112px; }
.square { width: 27px; height: 27px; background: #e1e1e1; border: 1px solid #adadad; }
.square.off { margin-left: 1px; background: #cacaca; border-color: #c0c0c0; }
.row .tb.boxed { border-color: #ccc; }
#f-res::selection { background: #0078d7; color: #fff; }
.fold { width: 100%; height: 31px; gap: 8px; padding: 4px 0 0 2px; font-size: 15px; }
.fold i { flex: 1; height: 1px; margin-left: -3px; background: #ddd; }
.desc { height: 75px; margin: 2px 0 0; }
.again { display: flex; align-items: center; gap: 4px; height: 28px; border-top: 1px solid #ddd; }
.again input { appearance: none; width: 15px; height: 15px; background: #fff; border: 1px solid #444; }
.actions { display: flex; justify-content: flex-end; gap: 4px; }
.actions button { width: 88px; height: 27px; background: #e1e1e1; border: 1px solid #adadad; }
.ok { position: relative; }
.ring { position: absolute; left: 0; top: -20px; pointer-events: none; }

.mark { position: absolute; left: 0; top: 10px; display: flex; gap: 3px; opacity: 0.85; pointer-events: none; }
.mark-text { display: flex; flex-direction: column; padding-top: 3px; }
.mark strong { font: 700 27px/32px "Noto Sans CJK SC", sans-serif; color: #2b8fdd; }
.mark em { font: 700 20px/24px "Liberation Serif", serif; color: #3c9c3c; }
</style>
